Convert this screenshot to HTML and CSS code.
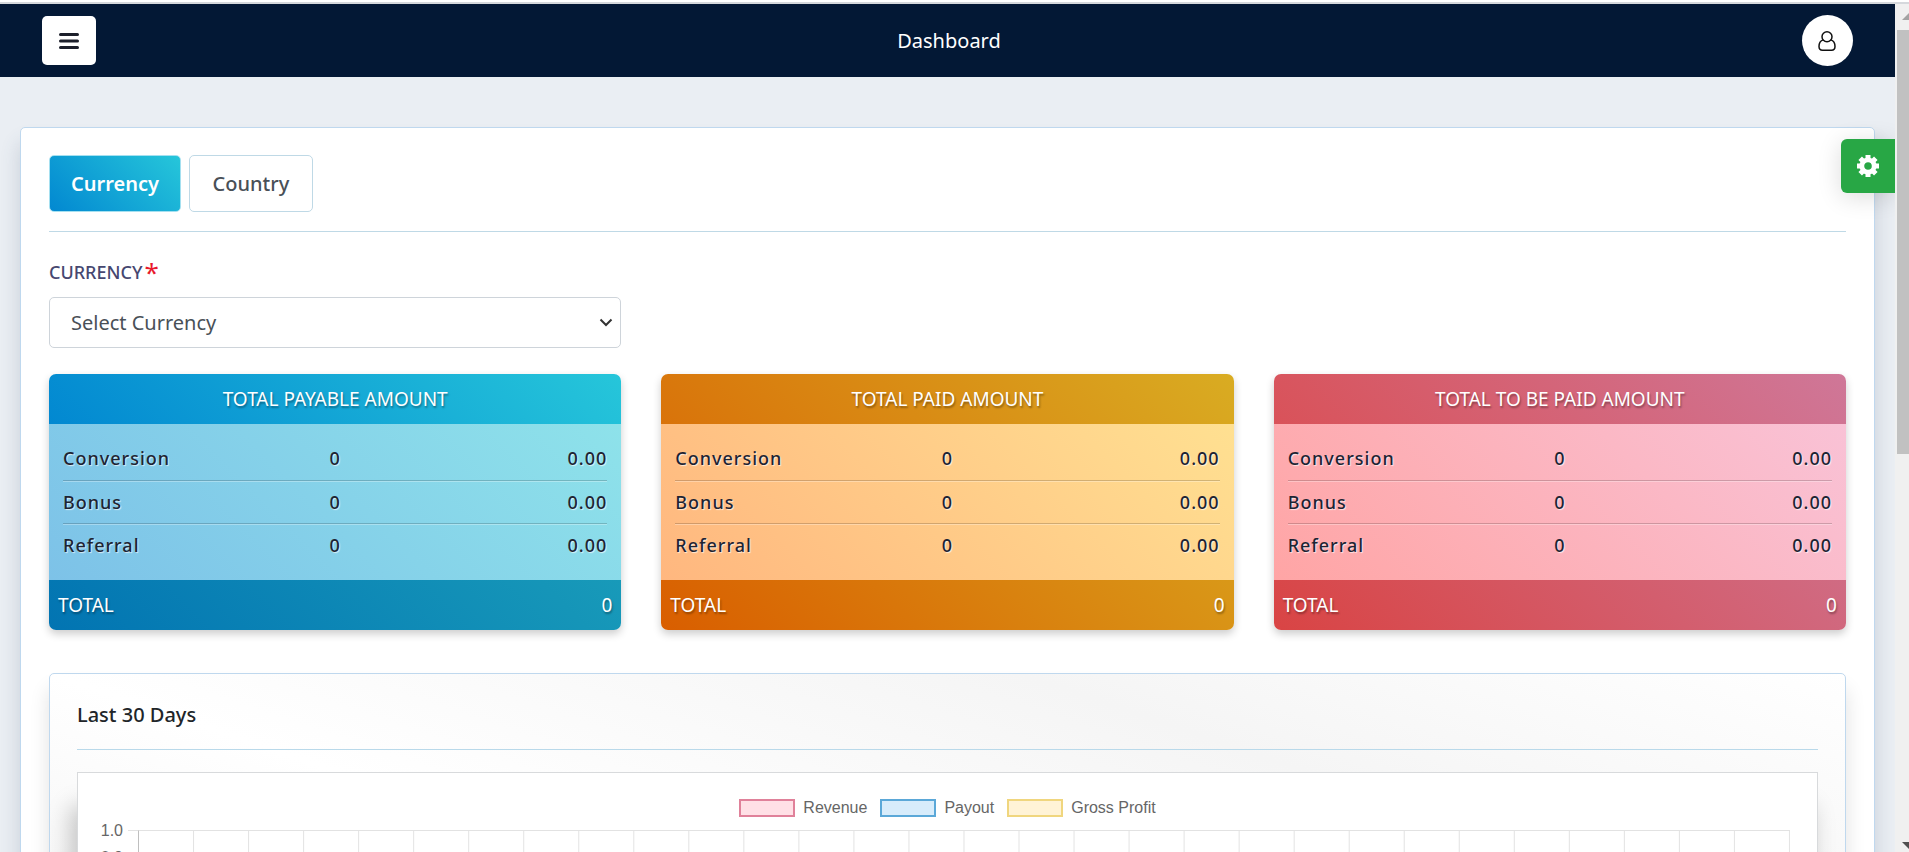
FILE: index.html
```html
<!DOCTYPE html>
<html lang="en">
<head>
    <meta charset="UTF-8">
    <meta name="viewport" content="width=device-width, initial-scale=1.0">
    <title>Dashboard</title>
    <link rel="stylesheet" href="styles.css">
</head>
<body>
    <div class="top-line"></div>
    <div class="frame">
        <div class="page">
            <header class="navbar">
                <button type="button" class="menu-btn" aria-label="Menu">
                    <svg width="20" height="18" viewBox="0 0 20 18"><path d="M1.500 2.500h17M1.500 9h17M1.500 15.500h17" stroke="#1c1f2b" stroke-width="3" stroke-linecap="round"/></svg>
                </button>
                <h1 class="page-title">Dashboard</h1>
                <button type="button" class="user-btn" aria-label="Account">
                    <svg width="18" height="20" viewBox="0 0 18 20" fill="none" stroke="#111" stroke-width="1.500"><circle cx="9" cy="5.800" r="5"/><path d="M5.200 8.900C2.500 9.700 1 12.500 1 15.500c0 2.400 1.400 3.700 3.500 3.700h9c2.100 0 3.500-1.300 3.500-3.700 0-3-1.500-5.800-4.200-6.600"/></svg>
                </button>
            </header>

            <button type="button" class="settings-btn" aria-label="Settings">
                <svg width="22" height="22" viewBox="0 0 22 22" fill="none" stroke="#fff"><circle cx="11" cy="11" r="6.200" stroke-width="4.800"/><path d="M11 0v4M11 18v4M0 11h4M18 11h4M3.200 3.200l3 3M15.800 15.800l3 3M3.200 18.800l3-3M15.800 6.200l3-3" stroke-width="5"/></svg>
            </button>

            <main class="card main-card">
                <nav class="tabs">
                    <button type="button" class="tab active">Currency</button>
                    <button type="button" class="tab">Country</button>
                </nav>

                <div class="columns">
                    <div class="field">
                        <label for="currency">CURRENCY<span class="required">*</span></label>
                        <div class="select-box">
                            <select id="currency">
                                <option>Select Currency</option>
                            </select>
                            <svg width="14" height="9" viewBox="0 0 14 9" fill="none" stroke="#333" stroke-width="2"><path d="M1.500 1.500L7 7l5.500-5.500"/></svg>
                        </div>
                    </div>
                </div>

                <div class="columns">
                    <section class="amount blue">
                        <h2>TOTAL PAYABLE AMOUNT</h2>
                        <div class="amount-body">
                            <table>
                                <tr><th>Conversion</th><td>0</td><td>0.00</td></tr>
                                <tr><th>Bonus</th><td>0</td><td>0.00</td></tr>
                                <tr><th>Referral</th><td>0</td><td>0.00</td></tr>
                            </table>
                        </div>
                        <div class="amount-total"><span>TOTAL</span><span>0</span></div>
                    </section>
                    <section class="amount orange">
                        <h2>TOTAL PAID AMOUNT</h2>
                        <div class="amount-body">
                            <table>
                                <tr><th>Conversion</th><td>0</td><td>0.00</td></tr>
                                <tr><th>Bonus</th><td>0</td><td>0.00</td></tr>
                                <tr><th>Referral</th><td>0</td><td>0.00</td></tr>
                            </table>
                        </div>
                        <div class="amount-total"><span>TOTAL</span><span>0</span></div>
                    </section>
                    <section class="amount red">
                        <h2>TOTAL TO BE PAID AMOUNT</h2>
                        <div class="amount-body">
                            <table>
                                <tr><th>Conversion</th><td>0</td><td>0.00</td></tr>
                                <tr><th>Bonus</th><td>0</td><td>0.00</td></tr>
                                <tr><th>Referral</th><td>0</td><td>0.00</td></tr>
                            </table>
                        </div>
                        <div class="amount-total"><span>TOTAL</span><span>0</span></div>
                    </section>
                </div>

                <section class="card chart-card">
                    <h2>Last 30 Days</h2>
                    <div class="chart">
                        <ul class="legend">
                            <li><i class="swatch revenue"></i>Revenue</li>
                            <li><i class="swatch payout"></i>Payout</li>
                            <li><i class="swatch profit"></i>Gross Profit</li>
                        </ul>
                        <div class="plot">
                            <ul class="ticks">
                                <li>1.0</li>
                                <li>0.9</li>
                            </ul>
                            <div class="tick-mark"></div>
                            <div class="grid"></div>
                        </div>
                    </div>
                </section>
            </main>
        </div>

        <div class="scrollbar">
            <svg class="arrow-up" width="14" height="8" viewBox="0 0 14 8"><path d="M5 7l7-7 7 7z" fill="#a3a3a3"/></svg>
            <div class="thumb"></div>
            <svg class="arrow-down" width="14" height="8" viewBox="0 0 14 8"><path d="M5 0l7 7 7-7z" fill="#505050"/></svg>
        </div>
    </div>
</body>
</html>
```
FILE: styles.css
```css
* {
    box-sizing: border-box;
}
body {
    margin: 0;
    height: 100vh;
    overflow: hidden;
    display: flex;
    flex-direction: column;
    font-family: "Noto Sans", "Open Sans", sans-serif;
    color: #212529;
    background-color: #f0f0f0;
}
button, select {
    font-family: inherit;
}
h1, h2, ul {
    margin: 0;
    padding: 0;
    font-weight: 400;
}
ul {
    list-style: none;
}
svg {
    display: block;
}
.top-line {
    flex: none;
    height: 4px;
    background-color: #fff;
    border-bottom: 2px solid #d5d8dc;
}
.frame {
    flex: 1;
    min-height: 0;
    display: flex;
    gap: 2px;
}
.page {
    flex: 1;
    position: relative;
    overflow: hidden;
    background-color: #eaeef3;
}

/* header */
.navbar {
    display: flex;
    align-items: center;
    justify-content: space-between;
    height: 73px;
    padding: 0 42px;
    background-color: #031835;
}
.page-title {
    font-size: 20px;
    color: #fff;
}
.menu-btn, .user-btn, .settings-btn {
    display: flex;
    align-items: center;
    justify-content: center;
    padding: 0;
    border: none;
    background-color: #fff;
    cursor: pointer;
}
.menu-btn {
    width: 54px;
    height: 49px;
    border-radius: 5px;
}
.user-btn {
    width: 51px;
    height: 51px;
    border-radius: 50%;
}
.settings-btn {
    position: absolute;
    top: 135px;
    right: 0;
    width: 54px;
    height: 54px;
    border-radius: 6px 0 0 6px;
    background-color: #28a745;
    box-shadow: 0 4px 24px rgba(0, 0, 0, 0.14);
}

.card {
    border: 1px solid #bfd8ee;
    border-radius: 5px;
    background-color: #fff;
    padding: 27px 28px;
}
.main-card {
    margin: 50px 20px 0;
    box-shadow: 0 16px 20px rgba(60, 80, 110, 0.2);
}

.tabs {
    display: flex;
    gap: 8px;
    padding-bottom: 19px;
    border-bottom: 1px solid #bfd9e6;
}
.tab {
    min-width: 124px;
    height: 57px;
    padding: 0 21px;
    border: 1px solid #bfd9e6;
    border-radius: 5px;
    background-color: #fff;
    font-size: 20px;
    font-weight: 500;
    color: #495057;
}
.tab.active {
    background: linear-gradient(45deg, #0288d1, #26c6da);
    border-color: #a5e0f0;
    font-weight: 600;
    color: #fff;
}

.columns {
    display: grid;
    grid-template-columns: repeat(3, 1fr);
    gap: 40px;
    margin-top: 26px;
}
.field label {
    display: flex;
    height: 28px;
    align-items: center;
    font-size: 18px;
    font-weight: 500;
    color: #464770;
}
.required {
    margin-left: 2px;
    font-size: 26px;
    font-weight: 400;
    color: #e8192c;
}
.select-box {
    display: grid;
    align-items: center;
    margin-top: 11px;
}
.select-box select,
.select-box svg {
    grid-area: 1 / 1;
}
.select-box select {
    appearance: none;
    width: 100%;
    height: 51px;
    padding: 0 21px;
    border: 1px solid #ced4da;
    border-radius: 5px;
    background-color: #fff;
    font-size: 20px;
    color: #495057;
}
.select-box svg {
    justify-self: end;
    margin-right: 8px;
    pointer-events: none;
}

/* amount cards */
.amount {
    border-radius: 7px;
    overflow: hidden;
    color: #fff;
    font-size: 18px;
    box-shadow: 0 4px 8px rgba(0, 0, 0, 0.2);
}
.amount h2,
.amount-total {
    height: 50px;
    line-height: 50px;
    font-size: 19px;
    text-shadow: 1px 2px 2px rgba(0, 0, 0, 0.35);
}
.amount h2 {
    text-align: center;
}
.amount-total {
    display: flex;
    justify-content: space-between;
    padding: 0 9px;
}
.amount-body {
    padding: 13px 14px 14px;
}
.amount table {
    width: 100%;
    table-layout: fixed;
    border-collapse: collapse;
    color: #1d2433;
}
.amount th,
.amount td {
    height: 43px;
    padding: 0;
    font-weight: 500;
    letter-spacing: 1px;
    text-align: center;
    text-shadow: 1px 1px 1px rgba(255, 255, 255, 0.7);
}
.amount th {
    text-align: left;
}
.amount td:last-child {
    text-align: right;
}
.amount tr + tr {
    border-top: 1px solid rgba(0, 0, 0, 0.18);
}
.amount tr + tr > * {
    box-shadow: inset 0 1px rgba(255, 255, 255, 0.3);
}
.blue h2 {
    background: linear-gradient(45deg, #0288d1, #26c6da);
}
.blue .amount-body {
    background: linear-gradient(45deg, #7dc2e8, #8ee2ea);
}
.blue .amount-total {
    background: linear-gradient(45deg, #0274b2, #189ab9);
}
.orange h2 {
    background: linear-gradient(45deg, #d9730a, #d9ac22);
}
.orange .amount-body {
    background: linear-gradient(45deg, #ffb77f, #ffe091);
}
.orange .amount-total {
    background: linear-gradient(45deg, #d95e00, #d99818);
}
.red h2 {
    background: linear-gradient(45deg, #d95259, #cf7798);
}
.red .amount-body {
    background: linear-gradient(45deg, #ffa5a5, #f9c2d6);
}
.red .amount-total {
    background: linear-gradient(45deg, #d94444, #d06b83);
}

/* chart */
.chart-card {
    margin-top: 43px;
    padding: 27px;
    background: linear-gradient(to top right, #fff, #f3f3f3 25%, #fff 50%, #f5f5f5 77%, #fff);
    box-shadow: 0 16px 20px rgba(0, 0, 0, 0.12);
}
.chart-card h2 {
    height: 49px;
    line-height: 28px;
    border-bottom: 1px solid #b9d9ea;
    font-size: 20px;
    font-weight: 500;
}
.chart {
    margin-top: 22px;
    padding: 26px 27px;
    border: 1px solid #d8dadc;
    background-color: #fff;
    box-shadow: -6px 34px 22px rgba(0, 0, 0, 0.22);
    font-family: "Liberation Sans", Arial, sans-serif;
    font-size: 16px;
    color: #666;
}
.legend {
    display: flex;
    justify-content: center;
    gap: 13px;
    line-height: 18px;
}
.legend li {
    display: flex;
    align-items: center;
    gap: 8px;
}
.swatch {
    width: 56px;
    height: 18px;
    border: 2px solid;
}
.revenue {
    border-color: #e0819a;
    background-color: #ffe0e6;
}
.payout {
    border-color: #5ba8d8;
    background-color: #d7ecfb;
}
.profit {
    border-color: #f0d67e;
    background-color: #fff3d6;
}
.plot {
    display: flex;
    margin-top: 13px;
}
.ticks {
    width: 18px;
    display: flex;
    flex-direction: column;
    align-items: flex-end;
}
.ticks li {
    height: 27px;
    line-height: 2px;
}
.tick-mark {
    width: 10px;
    margin-left: 5px;
    border-top: 1px solid #e2e2e2;
}
.grid {
    flex: 1;
    height: 400px;
    border-top: 1px solid #e2e2e2;
    border-left: 1px solid #bfbfbf;
    background: linear-gradient(to left, #e2e2e2 1px, transparent 1px) 0 0 / calc(100% / 30) 100%;
}

/* scrollbar */
.scrollbar {
    width: 12px;
    display: flex;
    flex-direction: column;
}
.arrow-up {
    margin: 9px 0;
}
.thumb {
    height: 50%;
    background-color: #c1c1c1;
}
.arrow-down {
    margin: auto 0 2px;
}
```
